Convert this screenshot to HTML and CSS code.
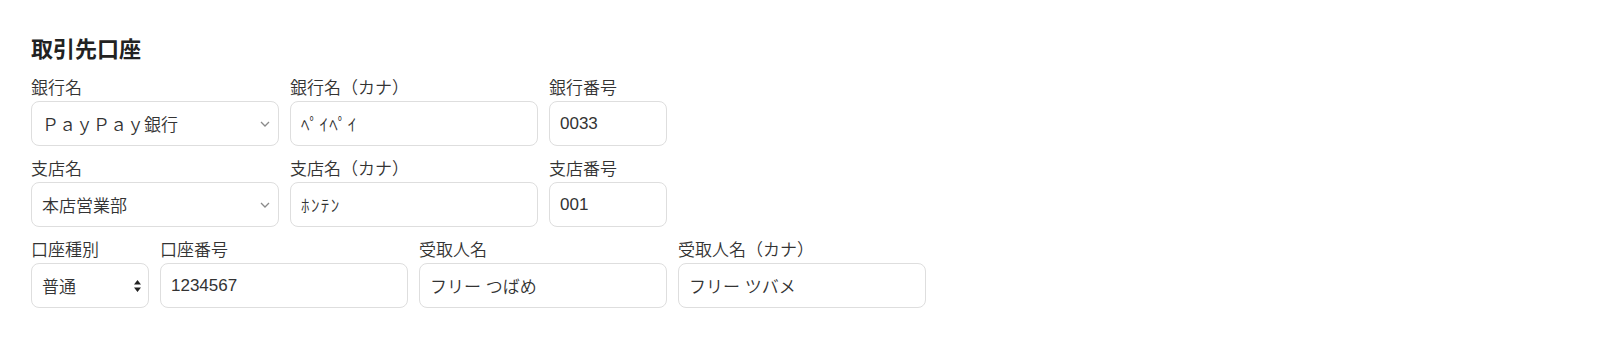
FILE: index.html
```html
<!DOCTYPE html>
<html lang="ja">
<head>
<meta charset="utf-8">
<title>取引先口座</title>
<link rel="stylesheet" href="styles.css">
</head>
<body>
<section class="account">
  <h2 class="title">取引先口座</h2>
  <div class="row">
    <div class="field big">
      <div class="label">銀行名</div>
      <div class="control select">
        <span class="value">ＰａｙＰａｙ銀行</span>
        <svg class="chev" width="10" height="6" viewBox="0 0 10 6"><path d="M1 1 L5 5 L9 1" fill="none" stroke="#8a8a8a" stroke-width="1.3"/></svg>
      </div>
    </div>
    <div class="field big">
      <div class="label">銀行名（カナ）</div>
      <div class="control"><span class="value hw">ﾍﾟｲﾍﾟｲ</span></div>
    </div>
    <div class="field small">
      <div class="label">銀行番号</div>
      <div class="control"><span class="value">0033</span></div>
    </div>
  </div>
  <div class="row">
    <div class="field big">
      <div class="label">支店名</div>
      <div class="control select">
        <span class="value">本店営業部</span>
        <svg class="chev" width="10" height="6" viewBox="0 0 10 6"><path d="M1 1 L5 5 L9 1" fill="none" stroke="#8a8a8a" stroke-width="1.3"/></svg>
      </div>
    </div>
    <div class="field big">
      <div class="label">支店名（カナ）</div>
      <div class="control"><span class="value hw">ﾎﾝﾃﾝ</span></div>
    </div>
    <div class="field small">
      <div class="label">支店番号</div>
      <div class="control"><span class="value">001</span></div>
    </div>
  </div>
  <div class="row">
    <div class="field small">
      <div class="label">口座種別</div>
      <div class="control select native">
        <span class="value">普通</span>
        <svg class="updown" width="7" height="12" viewBox="0 0 7 12"><path d="M3.5 0 L7 4.6 L0 4.6 Z M0 7.4 L7 7.4 L3.5 12 Z" fill="#222"/></svg>
      </div>
    </div>
    <div class="field big">
      <div class="label">口座番号</div>
      <div class="control"><span class="value">1234567</span></div>
    </div>
    <div class="field big">
      <div class="label">受取人名</div>
      <div class="control"><span class="value">フリー つばめ</span></div>
    </div>
    <div class="field big">
      <div class="label">受取人名（カナ）</div>
      <div class="control"><span class="value">フリー ツバメ</span></div>
    </div>
  </div>
</section>
</body>
</html>
```

FILE: styles.css
```css
html, body {
  margin: 0;
  background: #ffffff;
}
body {
  font-family: "Liberation Sans", "Noto Sans CJK JP", sans-serif;
  color: #333333;
}
.account {
  padding: 33px 31px 0 31px;
}
.title {
  margin: 0 0 17px 0;
  font-family: "Noto Sans CJK JP", sans-serif;
  font-size: 22px;
  line-height: 28px;
  font-weight: 700;
  color: #222222;
}
.row {
  display: flex;
  gap: 11px;
  margin-bottom: 13px;
}
.field {
  display: flex;
  flex-direction: column;
}
.field.big { width: 248px; }
.field.small { width: 118px; }
.label {
  font-size: 17px;
  line-height: 22px;
  font-weight: 350;
  color: #333333;
  margin-bottom: 1px;
}
.control {
  box-sizing: border-box;
  height: 45px;
  border: 1px solid #dedede;
  border-radius: 8px;
  background: #ffffff;
  display: flex;
  align-items: center;
  justify-content: space-between;
  padding: 0 10px 0 10px;
  font-size: 17px;
  font-weight: 350;
  color: #333333;
}
.control.select { padding-right: 8px; }
.control.native { padding-right: 7px; }
.value {
  white-space: nowrap;
}
.value.hw { letter-spacing: 1.4px; }
.chev { flex: none; }
.updown { flex: none; }
```
